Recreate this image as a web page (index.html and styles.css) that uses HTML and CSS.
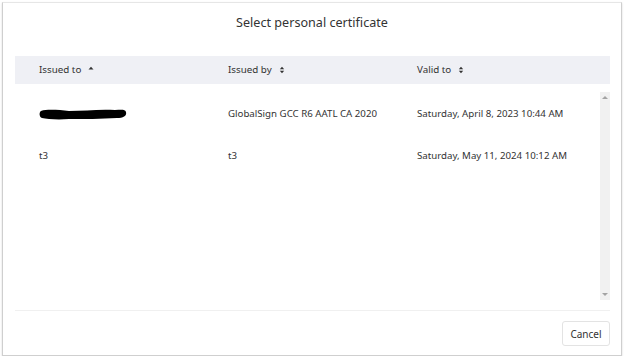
FILE: index.html
```html
<!DOCTYPE html>
<html lang="en">
<head>
    <meta charset="UTF-8">
    <title>Select personal certificate</title>
    <link rel="stylesheet" href="styles.css">
</head>
<body>
<div class="dialog">
    <h2 class="dialog-title">Select personal certificate</h2>

    <div class="cert-table">
        <div class="table-head">
            <div class="head-cell">Issued to
                <svg class="sort" width="6" height="8" viewBox="0 0 6 8"><path d="M0.5 3.5 L3 0.8 L5.5 3.5 Z"/></svg>
            </div>
            <div class="head-cell">Issued by
                <svg class="sort" width="6" height="8" viewBox="0 0 6 8"><path d="M0.8 3.2 L3 0.8 L5.2 3.2 Z M0.8 4.8 L3 7.2 L5.2 4.8 Z"/></svg>
            </div>
            <div class="head-cell">Valid to
                <svg class="sort" width="6" height="8" viewBox="0 0 6 8"><path d="M0.8 3.2 L3 0.8 L5.2 3.2 Z M0.8 4.8 L3 7.2 L5.2 4.8 Z"/></svg>
            </div>
        </div>

        <div class="table-body">
            <div class="rows">
                <div class="row">
                    <div class="cell">
                        <!-- redacted name -->
                        <svg class="redact" width="88" height="13" viewBox="0 0 88 13">
                            <path d="M2 3 C8 1 20 2 30 3 C45 3 60 1 76 2 C82 2 86 1 87 4 C88 8 84 10 78 10 C62 11 45 11 30 11 C18 12 8 11 3 10 C0 9 0 4 2 3 Z"/>
                        </svg>
                    </div>
                    <div class="cell">GlobalSign GCC R6 AATL CA 2020</div>
                    <div class="cell">Saturday, April 8, 2023 10:44 AM</div>
                </div>
                <div class="row">
                    <div class="cell">t3</div>
                    <div class="cell">t3</div>
                    <div class="cell">Saturday, May 11, 2024 10:12 AM</div>
                </div>
            </div>
            <div class="scrollbar">
                <span class="arrow up"></span>
                <span class="arrow down"></span>
            </div>
        </div>
    </div>

    <div class="dialog-footer">
        <button class="btn-cancel">Cancel</button>
    </div>
</div>
</body>
</html>
```

FILE: styles.css
```css
body {
    margin: 0;
    background: #fff;
    font-family: "Noto Sans", "Open Sans", sans-serif;
    color: #333;
}
.dialog {
    margin: 2px 2px 0 2px;
    height: 354px;
    border: 1px solid #cfcfcf;
    border-top-color: #e6e6e6;
    box-shadow: 0 1px 2px rgba(0,0,0,0.15);
    display: flex;
    flex-direction: column;
    box-sizing: border-box;
    width: 620px;
}
.dialog-title {
    margin: 0;
    height: 53px;
    padding-top: 11px;
    box-sizing: border-box;
    text-align: center;
    font-size: 12.6px;
    font-weight: normal;
    color: #333;
}
.cert-table {
    margin: 0 11px 0 12px;
}
.table-head {
    display: grid;
    grid-template-columns: 189px 189px 1fr;
    height: 28px;
    padding-left: 24px;
    padding-bottom: 1px;
    box-sizing: border-box;
    align-items: center;
    background: #eff0f5;
    font-size: 9.8px;
}
.head-cell {
    display: flex;
    align-items: center;
    gap: 7px;
}
.sort {
    fill: #333;
}
.table-body {
    display: flex;
    height: 226px;
    border-bottom: 1px solid #f0f0f0;
}
.rows {
    flex: 1;
    padding-top: 8px;
}
.row {
    display: grid;
    grid-template-columns: 189px 189px 1fr;
    padding-left: 24px;
    height: 42px;
    align-items: center;
    font-size: 9.7px;
    color: #333;
}
.redact {
    display: block;
    margin-top: 2px;
    fill: #000;
}
.scrollbar {
    width: 10px;
    margin: 8px 0 10px 0;
    background: #f1f1f1;
    display: flex;
    flex-direction: column;
    justify-content: space-between;
    align-items: center;
    padding: 4px 0;
    box-sizing: border-box;
}
.arrow {
    width: 0;
    height: 0;
    border-left: 3px solid transparent;
    border-right: 3px solid transparent;
}
.arrow.up {
    border-bottom: 3px solid #a3a3a3;
}
.arrow.down {
    border-top: 3px solid #a3a3a3;
}
.dialog-footer {
    display: flex;
    justify-content: flex-end;
    padding: 10px 11px 0 0;
}
.btn-cancel {
    font-family: "Noto Sans", "Open Sans", sans-serif;
    font-size: 10px;
    color: #333;
    background: #fff;
    border: 1px solid #e3e3e3;
    border-radius: 3px;
    height: 25px;
    width: 48px;
    padding: 0;
}
```
